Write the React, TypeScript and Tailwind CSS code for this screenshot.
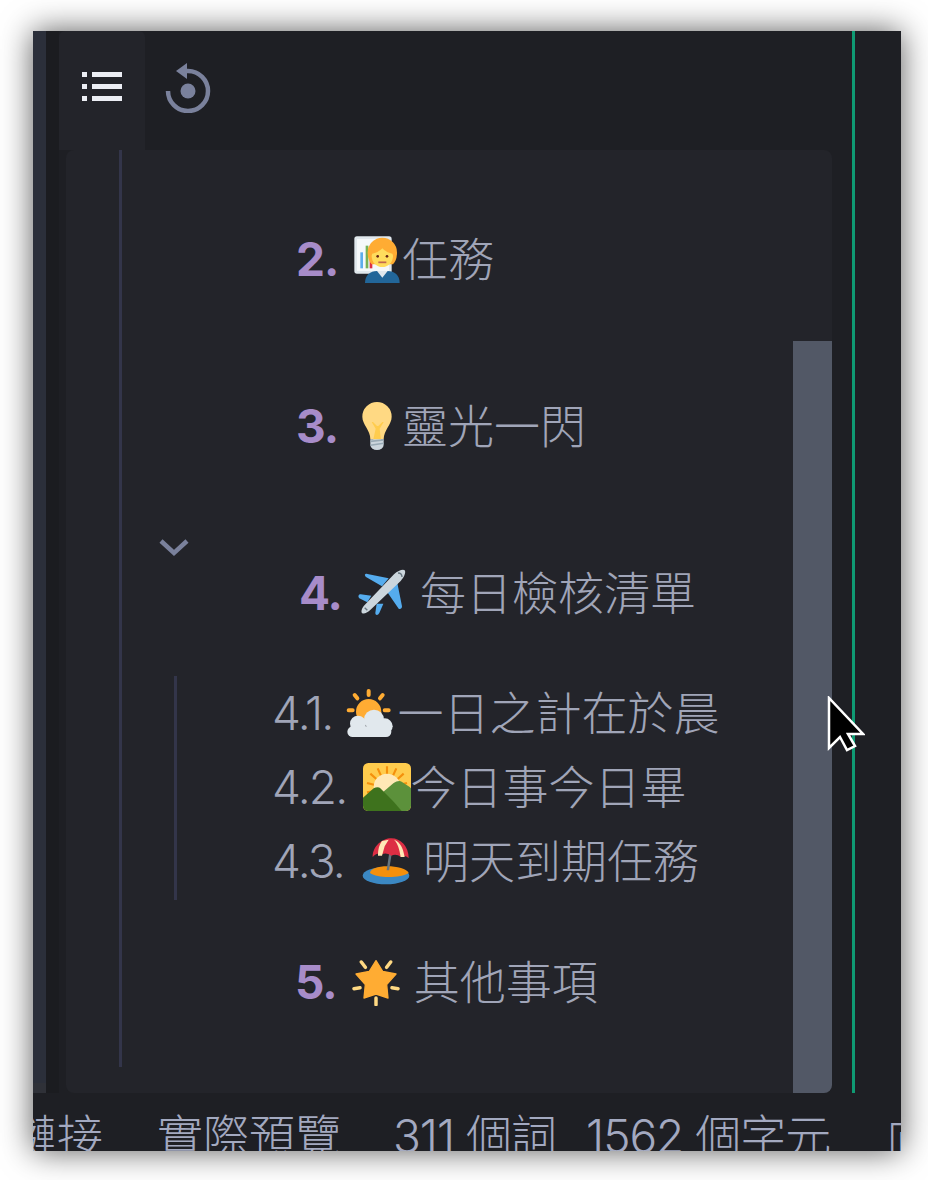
import React from "react";

const cjk = { fontFamily: "Inter, 'Noto Sans CJK TC', sans-serif" };

const ListIcon = () => (
  <svg width="42" height="32" viewBox="0 0 42 32" fill="#eceef4">
    <rect x="0" y="1" width="5" height="5" />
    <rect x="10" y="1" width="30" height="5" />
    <rect x="0" y="13" width="5" height="5" />
    <rect x="10" y="13" width="30" height="5" />
    <rect x="0" y="25" width="5" height="5" />
    <rect x="10" y="25" width="30" height="5" />
  </svg>
);

const HistoryIcon = () => (
  <svg width="48" height="52" viewBox="0 0 48 52" fill="none">
    <path d="M5 30a20 20 0 1 0 20-20h-3" stroke="#7a819c" strokeWidth="4.5" />
    <path d="M24 2v16l-11-8z" fill="#7a819c" />
    <circle cx="25" cy="30" r="7.5" fill="#7a819c" />
  </svg>
);

const Worker = () => (
  <svg className="w-12 h-12" viewBox="0 0 36 36">
    <rect x="1" y="1" width="28" height="28" rx="2" fill="#e1e8ed" />
    <rect x="3" y="3" width="24" height="24" fill="#f5f8fa" />
    <rect x="5.500" y="13" width="2" height="12" fill="#5dadec" />
    <rect x="9.500" y="8" width="2" height="17" fill="#77b255" />
    <rect x="12.500" y="19" width="2" height="6" fill="#dd2e44" />
    <path d="M9 36c0-6 4-9 9-9h8c5 0 9 3 9 9z" fill="#226699" />
    <path d="M18 27l4 5 4-5z" fill="#e1e8ed" />
    <path d="M11 13a11 11 0 1 1 22 0c0 4-1 7-3 9H14c-2-2-3-5-3-9z" fill="#ffac33" />
    <circle cx="22" cy="16" r="8" fill="#ffdc5d" />
    <path d="M14 14c3 0 6-2 8-4 2 2 5 4 8 4V6H14z" fill="#ffac33" />
    <circle cx="18.500" cy="16" r="1" fill="#662113" />
    <circle cx="25.500" cy="16" r="1" fill="#662113" />
    <path d="M19 20.500h6" stroke="#c1694f" strokeWidth="1.300" />
  </svg>
);

const Bulb = () => (
  <svg className="w-12 h-12" viewBox="0 0 36 36">
    <path d="M29 11c0 6-6 10-6 17H13c0-7-6-11-6-17a11 11 0 0 1 22 0z" fill="#ffd983" />
    <path d="M15 29h6l-1-9 3-5h-1l-3 3-1 0-3-3h-1l3 5z" fill="#ffcc4d" />
    <path d="M13 28h10v4a5 4 0 0 1-10 0z" fill="#ccd6dd" />
    <path d="M13 29.500l10-1M13 32.500l10-1.500" stroke="#99aab5" strokeWidth="1.200" />
  </svg>
);

const Plane = () => (
  <svg className="w-12 h-12" viewBox="0 0 36 36">
    <path d="M27 6l2 2 4 20c0 2-2 3-3 1l-9-13z" fill="#55acee" />
    <path d="M8 4c-2-1-4 0-2 2l12 7 5-6z" fill="#55acee" />
    <path d="M14 26l-1 7c0 2 2 2 3 0l3-7z" fill="#55acee" />
    <path d="M10 20l-8-1c-2 0-2 2-1 3l6 3z" fill="#55acee" />
    <path d="M3 33c-1-1 0-4 2-6L27 4c3-3 7-4 8-3s0 5-3 8L9 31c-2 2-5 3-6 2z" fill="#ccd6dd" />
    <path d="M30 3c2 0 3 1 3 3" stroke="#66757f" strokeWidth="1" fill="none" />
    <path d="M5 29l2 2" stroke="#66757f" strokeWidth="1" />
  </svg>
);

const SunCloud = () => (
  <svg className="w-12 h-12" viewBox="0 0 36 36">
    <g stroke="#ffac33" strokeWidth="3" strokeLinecap="round">
      <path d="M17 1.500v3M6.500 4.500l2 2.500M27.500 4.500l-2 2.500M2 16h3M29 16h3" />
    </g>
    <circle cx="17" cy="17" r="9.500" fill="#ffac33" />
    <g fill="#e1e8ed">
      <circle cx="21" cy="23" r="7.500" />
      <circle cx="9" cy="26" r="6" />
      <circle cx="29" cy="28" r="6" />
      <rect x="1" y="28" width="33" height="8" rx="4" />
    </g>
  </svg>
);

const Sunrise = () => (
  <svg className="w-12 h-12" viewBox="0 0 36 36">
    <rect width="36" height="36" rx="4" fill="#ffcc4d" />
    <g stroke="#f4900c" strokeWidth="1.600">
      <path d="M18 2.500v6M11 4l2.500 5.500M25 4l-2.500 5.500M5.500 8l4.500 4M30.500 8L26 12M3 15l6 1.500M33 15l-6 1.500M3 22l6-1M33 22l-6-1" />
    </g>
    <circle cx="18" cy="18" r="10" fill="#ffe8b6" />
    <path d="M36 32V19l-1-1-6-4c-2-1-4 0-6 1L10 26l10 10h12a4 4 0 0 0 4-4z" fill="#5c913b" />
    <path d="M0 32v-6l8-7c2-1 4-1 5 0l10 10 6 7H4a4 4 0 0 1-4-4z" fill="#3e721d" />
  </svg>
);

const Island = () => (
  <svg className="w-12 h-12" viewBox="0 0 36 36">
    <ellipse cx="18" cy="29" rx="17.500" ry="6.500" fill="#3b88c3" />
    <path d="M6 27c0-3 6-5 13-5s15 2 16 5c-3 2-9 3-15 3S9 29 6 27z" fill="#f4900c" />
    <path d="M21 8l-2.500 17h1.800L23 8z" fill="#66757f" />
    <path d="M8 15C8 7 15 1 22 1s13 6 13 15c-2-2-4-2-6-1-2-2-5-2-7-1-3-2-5-2-7-1-2-1-4-1-7 2z" fill="#dd2e44" />
    <path d="M15 3c-2 3-3 6-3 11l3 0 2-7 3-5zM24 2c3 3 4 7 5 13l3 0c-1-5-2-9-6-12z" fill="#ffe8b6" />
  </svg>
);

const Star = () => (
  <svg className="w-12 h-12" viewBox="0 0 36 36">
    <g stroke="#ffd983" strokeWidth="2.600" strokeLinecap="round">
      <path d="M7 3l3 4M29 3l-3 4M1.500 23l4.500-.700M34.500 23l-4.500-.700M18 30v5" />
    </g>
    <path d="M18 2l5 8 10 2-7 8 1 10-9-3-9 3 1-10-7-8 10-2z" fill="#ffac33" stroke="#ffac33" strokeLinejoin="round" />
  </svg>
);

const Heading = ({
  num,
  emoji,
  text,
  className,
  gap,
  textGap,
}: {
  num: string;
  emoji: React.ReactNode;
  text: string;
  className: string;
  gap: string;
  textGap: string;
}) => (
  <div className={`flex items-center h-[74px] pb-[2px] whitespace-nowrap ${className}`}>
    <span className="font-bold text-[#a78cc9] tracking-[-1px]">{num}</span>
    <span className={gap}>{emoji}</span>
    <span className={`font-light ${textGap}`}>{text}</span>
  </div>
);

const SubItem = ({
  num,
  emoji,
  text,
  gap,
  textGap,
}: {
  num: string;
  emoji: React.ReactNode;
  text: string;
  gap: string;
  textGap: string;
}) => (
  <div className="flex items-center h-[74px] pl-[95px] whitespace-nowrap">
    <span className="font-light tracking-[-1.750px]">{num}</span>
    <span className={gap}>{emoji}</span>
    <span className={`font-light ${textGap}`}>{text}</span>
  </div>
);

export default function App() {
  return (
    <div className="w-[928px] h-[1180px] bg-white pl-[33px] pt-[31px] overflow-hidden" style={cjk}>
      <div className="relative w-[868px] h-[1120px] flex flex-col bg-[#1e1f24] shadow-[0_0_30px_rgba(0,0,0,0.65)] text-[46px] text-[#a0a5b8]">
        <div className="flex h-[1062px]">
          <div className="w-[13px] bg-[#2b2f3a] flex flex-col justify-end">
            <div className="h-[10px] bg-[#2f3138] mt-[3px]" />
          </div>
          <div className="w-[13px] bg-[#1b1c20]" />
          <div className="w-[773px] flex flex-col">
            <div className="flex h-[119px]">
              <div className="w-[86px] bg-[#23242a] rounded-t-md flex items-center justify-center pb-[8px] pl-[2px]">
                <ListIcon />
              </div>
              <div className="ml-[18px] flex items-center pb-[8px]">
                <HistoryIcon />
              </div>
            </div>
            <div className="ml-[7px] w-[766px] h-[943px] bg-[#23242a] rounded-lg flex overflow-hidden">
              <div className="flex-1">
                <div className="ml-[53px] h-[917px] border-l-[3px] border-[#33354a] pt-[73px]">
                  <Heading num="2." emoji={<Worker />} text="任務" className="pl-[174px]" gap="ml-[15px]" textGap="ml-[1px]" />
                  <Heading num="3." emoji={<Bulb />} text="靈光一閃" className="pl-[174px] mt-[93px]" gap="ml-[15px]" textGap="ml-[1px]" />
                  <div className="h-[19px] mt-[74px] ml-[37px]">
                    <svg width="30" height="20" viewBox="0 0 30 20" fill="none">
                      <path d="M2 3l13 12 13-12" stroke="#7a819c" strokeWidth="4.500" />
                    </svg>
                  </div>
                  <Heading num="4." emoji={<Plane />} text="每日檢核清單" className="pl-[177px]" gap="ml-[16px]" textGap="ml-[14px]" />
                  <div className="ml-[52px] mt-[45px] border-l-[3px] border-[#33354a] h-[224px]">
                    <SubItem num="4.1." emoji={<SunCloud />} text="一日之計在於晨" gap="ml-[14px]" textGap="ml-[3px]" />
                    <SubItem num="4.2." emoji={<Sunrise />} text="今日事今日畢" gap="ml-[16px]" textGap="ml-[0px]" />
                    <SubItem num="4.3." emoji={<Island />} text="明天到期任務" gap="ml-[18px]" textGap="ml-[13px]" />
                  </div>
                  <Heading num="5." emoji={<Star />} text="其他事項" className="pl-[173px] mt-[46px]" gap="ml-[15px]" textGap="ml-[14px]" />
                </div>
              </div>
              <div className="w-[39px] pt-[191px]">
                <div className="h-full bg-[#525866]" />
              </div>
            </div>
          </div>
          <div className="ml-[20px] w-[3px] bg-[#0f9a73]" />
        </div>
        <div className="h-[58px] overflow-hidden flex font-light whitespace-nowrap text-[#a3a9c0] leading-[60px] pt-[13px]">
          <span className="ml-[-22px]">鏈接</span>
          <span className="ml-[54px]">實際預覽</span>
          <span className="ml-[52px] tracking-[-1px]">311 個詞</span>
          <span className="ml-[30px] tracking-[-1px]">1562 個字元</span>
          <span className="ml-[56px]">向</span>
        </div>
        <svg className="absolute left-[794px] top-[665px]" width="38" height="56" viewBox="0 0 38 56">
          <path d="M2 2v50l11-11 7 13 8-4-7-12h15z" fill="#000" stroke="#fff" strokeWidth="2.500" />
        </svg>
      </div>
    </div>
  );
}
